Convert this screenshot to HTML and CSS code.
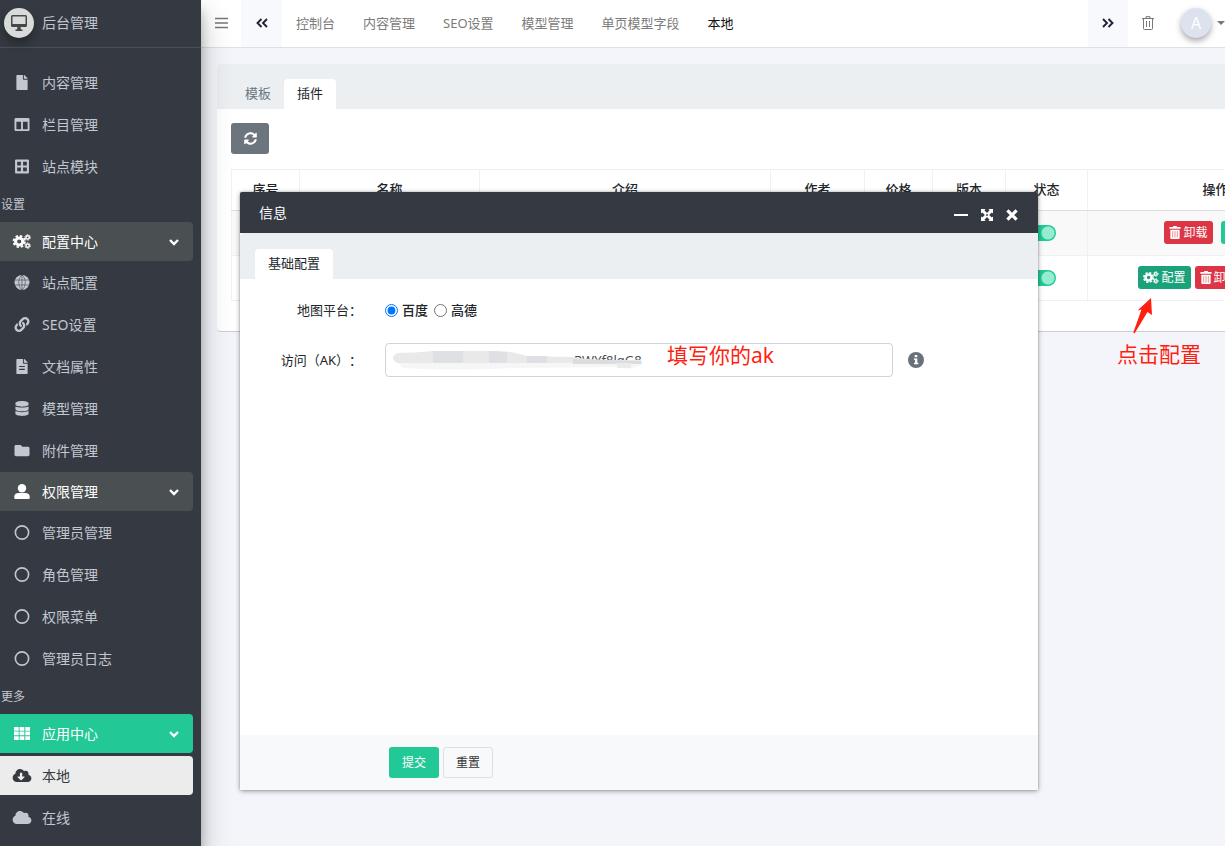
FILE: index.html
```html
<!DOCTYPE html>
<html lang="zh-CN">
<head>
<meta charset="utf-8">
<title>后台管理</title>
<link rel="stylesheet" href="styles.css">
</head>
<body>
<svg class="sprite" aria-hidden="true">
  <symbol id="file" viewBox="0 0 384 512"><path d="M224 136V0H24C10.700 0 0 10.700 0 24v464c0 13.300 10.700 24 24 24h336c13.300 0 24-10.700 24-24V160H248c-13.200 0-24-10.800-24-24zm160-14v6H256V0h6c6.400 0 12.500 2.500 17 7l98 98c4.500 4.500 7 10.600 7 17z"/></symbol>
  <symbol id="doc" viewBox="0 0 384 512"><path fill-rule="evenodd" d="M224 136V0H24C10.700 0 0 10.700 0 24v464c0 13.300 10.700 24 24 24h336c13.300 0 24-10.700 24-24V160H248c-13.200 0-24-10.800-24-24zm160-14v6H256V0h6c6.400 0 12.500 2.500 17 7l98 98c4.500 4.500 7 10.600 7 17zM96 240v36h192v-36zM96 336v36h192v-36z"/></symbol>
  <symbol id="columns" viewBox="0 0 512 512"><path d="M464 32H48C21.490 32 0 53.490 0 80v352c0 26.510 21.490 48 48 48h416c26.510 0 48-21.490 48-48V80c0-26.510-21.490-48-48-48zM224 416H64V160h160v256zm224 0H288V160h160v256z"/></symbol>
  <symbol id="grid4" viewBox="0 0 14 14"><path fill-rule="evenodd" d="M1.500.5h11a1 1 0 0 1 1 1v11a1 1 0 0 1-1 1h-11a1 1 0 0 1-1-1v-11a1 1 0 0 1 1-1zM2.500 2.500V6H6V2.500zM8 2.500V6h3.500V2.500zM2.500 8v3.500H6V8zM8 8v3.500h3.500V8z"/></symbol>
  <symbol id="gears" viewBox="0 0 20 16"><g fill="none" stroke="currentColor"><circle cx="7" cy="8" r="3.800" stroke-width="3.200"/><circle cx="7" cy="8" r="6" stroke-width="2" stroke-dasharray="2.700 2.012"/><circle cx="16" cy="3.600" r="1.800" stroke-width="1.600"/><circle cx="16" cy="3.600" r="2.900" stroke-width="1" stroke-dasharray="1.700 1.337"/><circle cx="16" cy="12.400" r="1.800" stroke-width="1.600"/><circle cx="16" cy="12.400" r="2.900" stroke-width="1" stroke-dasharray="1.700 1.337"/></g></symbol>
  <symbol id="globe" viewBox="0 0 14 14"><circle cx="7" cy="7" r="7"/><path d="M0 4.700h14M0 9.300h14M7 0v14M7 0C3 3 3 11 7 14M7 0c4 3 4 11 0 14" fill="none" stroke="#353a42" stroke-width=".5"/></symbol>
  <symbol id="link" viewBox="0 0 512 512"><path d="M326.612 185.391c59.747 59.809 58.927 155.698.36 214.590-.11.12-.24.25-.36.37l-67.200 67.200c-59.270 59.270-155.699 59.262-214.960 0-59.270-59.260-59.270-155.700 0-214.960l37.106-37.106c9.840-9.840 26.786-3.300 27.294 10.606.648 17.722 3.826 35.527 9.690 52.721 1.986 5.822.567 12.262-3.783 16.612l-13.087 13.087c-28.026 28.026-28.905 73.660-1.155 101.960 28.024 28.579 74.086 28.749 102.325.51l67.200-67.190c28.191-28.191 28.073-73.757 0-101.830-3.701-3.694-7.429-6.564-10.341-8.569a16.037 16.037 0 0 1-6.947-12.606c-.396-10.567 3.348-21.456 11.698-29.806l21.054-21.055c5.521-5.521 14.182-6.199 20.584-1.731a152.482 152.482 0 0 1 20.522 17.197zM467.547 44.449c-59.261-59.262-155.690-59.270-214.960 0l-67.200 67.200c-.12.12-.25.25-.36.37-58.566 58.892-59.387 154.781.36 214.590a152.454 152.454 0 0 0 20.521 17.196c6.402 4.468 15.064 3.789 20.584-1.731l21.054-21.055c8.350-8.350 12.094-19.239 11.698-29.806a16.037 16.037 0 0 0-6.947-12.606c-2.912-2.005-6.640-4.875-10.341-8.569-28.073-28.073-28.191-73.639 0-101.830l67.200-67.190c28.239-28.239 74.300-28.069 102.325.51 27.750 28.300 26.872 73.934-1.155 101.960l-13.087 13.087c-4.350 4.350-5.769 10.790-3.783 16.612 5.864 17.194 9.042 34.999 9.690 52.721.509 13.906 17.454 20.446 27.294 10.606l37.106-37.106c59.271-59.259 59.271-155.699.001-214.959z"/></symbol>
  <symbol id="db" viewBox="0 0 448 512"><path d="M448 73v46c0 40-100 73-224 73S0 159 0 119V73C0 33 100 0 224 0s224 33 224 73zM448 176v103c0 40-100 73-224 73S0 319 0 279V176c48 33 136 49 224 49s176-16 224-49zm0 160v103c0 40-100 73-224 73S0 479 0 439V336c48 33 136 49 224 49s176-16 224-49z"/></symbol>
  <symbol id="folder" viewBox="0 0 512 512"><path d="M464 128H272l-64-64H48C21.500 64 0 85.500 0 112v288c0 26.500 21.500 48 48 48h416c26.500 0 48-21.500 48-48V176c0-26.500-21.500-48-48-48z"/></symbol>
  <symbol id="user" viewBox="0 0 16 15"><circle cx="8" cy="4.300" r="4.200"/><path d="M4.500 9h7C14 9 15.700 10.500 15.700 12.500V14a1 1 0 0 1-1 1H1.300a1 1 0 0 1-1-1v-1.500C.3 10.500 2 9 4.500 9z"/></symbol>
  <symbol id="ring" viewBox="0 0 14 14"><circle cx="7" cy="7" r="6.200" fill="none" stroke="currentColor" stroke-width="1.500"/></symbol>
  <symbol id="grid9" viewBox="0 0 16 13"><path d="M0 0h4.700v3.700H0zM5.600 0h4.700v3.700H5.600zM11.300 0H16v3.700h-4.700zM0 4.600h4.700v3.700H0zM5.600 4.600h4.700v3.700H5.600zM11.300 4.600H16v3.700h-4.700zM0 9.300h4.700V13H0zM5.600 9.300h4.700V13H5.600zM11.300 9.300H16V13h-4.700z"/></symbol>
  <symbol id="cloud" viewBox="0 0 640 512"><path d="M538 227c4-11 6-23 6-35 0-53-43-96-96-96-20 0-38 6-53 16C367 64 315 32 256 32c-88 0-160 72-160 160v8C40 220 0 273 0 336c0 79.500 64.500 144 144 144h368c71 0 128-57 128-128 0-62-44-114-102-125z"/></symbol>
  <symbol id="cloud-down" viewBox="0 0 640 512"><path d="M538 227c4-11 6-23 6-35 0-53-43-96-96-96-20 0-38 6-53 16C367 64 315 32 256 32c-88 0-160 72-160 160v8C40 220 0 273 0 336c0 79.500 64.500 144 144 144h368c71 0 128-57 128-128 0-62-44-114-102-125zM405 315L299 421c-6 6-16 6-22 0L171 315c-10-10-3-27 12-27h65V176c0-9 7-16 16-16h48c9 0 16 7 16 16v112h65c15 0 22 17 12 27z"/></symbol>
  <symbol id="sync" viewBox="0 0 512 512"><path d="M370.720 133.280C339.458 104 298.888 88 255.848 88c-77.458 0-144.328 53.178-162.791 126.850-1.344 5.363-6.122 9.150-11.651 9.150H24.103c-7.498 0-13.194-6.807-11.807-14.176C33.933 94.924 134.813 8 256 8c66.448 0 126.791 26.136 171.315 68.685L463.030 40.970C478.149 25.851 504 36.559 504 57.941V192c0 13.255-10.745 24-24 24H345.941c-21.382 0-32.090-25.851-16.971-40.971zM32 296h134.059c21.382 0 32.090 25.851 16.971 40.971l-41.750 41.750c31.262 29.273 71.835 45.319 114.876 45.280 77.418-.07 144.315-53.144 162.787-126.849 1.344-5.363 6.122-9.150 11.651-9.150h57.304c7.498 0 13.194 6.807 11.807 14.176C478.067 417.076 377.187 504 256 504c-66.448 0-126.791-26.136-171.315-68.685L48.970 471.030C33.851 486.149 8 475.441 8 454.059V320c0-13.255 10.745-24 24-24z"/></symbol>
  <symbol id="down" viewBox="0 0 10 8"><path d="M1 2l4 4 4-4" fill="none" stroke="currentColor" stroke-width="2.400"/></symbol>
  <symbol id="trash" viewBox="0 0 12 14"><path fill-rule="evenodd" d="M4 0h4v1h4v2H0V1h4zM1 4h10v9a1 1 0 0 1-1 1H2a1 1 0 0 1-1-1z"/><path d="M3.500 5.500v7M6 5.500v7M8.500 5.500v7" stroke="#dc3545" stroke-width=".6"/></symbol>
</svg>

<div class="app">
  <aside class="sidebar">
    <a class="brand" href="#">
      <span class="brand-logo"><svg viewBox="0 0 16 16" width="16" height="16"><path fill-rule="evenodd" d="M1.500 0h13A1.500 1.500 0 0 1 16 1.500v9a1.500 1.500 0 0 1-1.500 1.500h-13A1.500 1.500 0 0 1 0 10.500v-9A1.500 1.500 0 0 1 1.500 0zM1.500 1.500v7.500h13V1.500zM6.500 12h3l.5 2.500h1.500V16h-7v-1.500H6z"/></svg></span>
      <span>后台管理</span>
    </a>
    <nav class="side-nav">
      <ul class="menu">
        <li><a class="item" href="#"><svg class="ico"><use href="#file"/></svg>内容管理</a></li>
        <li><a class="item" href="#"><svg class="ico"><use href="#columns"/></svg>栏目管理</a></li>
        <li><a class="item" href="#"><svg class="ico"><use href="#grid4"/></svg>站点模块</a></li>
      </ul>
      <h2 class="menu-label">设置</h2>
      <ul class="menu menu-tree">
        <li>
          <a class="item open" href="#"><svg class="ico"><use href="#gears"/></svg>配置中心<svg class="chev"><use href="#down"/></svg></a>
          <ul class="menu sub">
            <li><a class="item" href="#"><svg class="ico"><use href="#globe"/></svg>站点配置</a></li>
            <li><a class="item" href="#"><svg class="ico"><use href="#link"/></svg>SEO设置</a></li>
            <li><a class="item" href="#"><svg class="ico"><use href="#doc"/></svg>文档属性</a></li>
            <li><a class="item" href="#"><svg class="ico"><use href="#db"/></svg>模型管理</a></li>
            <li><a class="item" href="#"><svg class="ico"><use href="#folder"/></svg>附件管理</a></li>
          </ul>
        </li>
        <li>
          <a class="item open" href="#"><svg class="ico"><use href="#user"/></svg>权限管理<svg class="chev"><use href="#down"/></svg></a>
          <ul class="menu sub">
            <li><a class="item" href="#"><svg class="ico"><use href="#ring"/></svg>管理员管理</a></li>
            <li><a class="item" href="#"><svg class="ico"><use href="#ring"/></svg>角色管理</a></li>
            <li><a class="item" href="#"><svg class="ico"><use href="#ring"/></svg>权限菜单</a></li>
            <li><a class="item" href="#"><svg class="ico"><use href="#ring"/></svg>管理员日志</a></li>
          </ul>
        </li>
      </ul>
      <h2 class="menu-label">更多</h2>
      <ul class="menu">
        <li><a class="item open primary" href="#"><svg class="ico short"><use href="#grid9"/></svg>应用中心<svg class="chev"><use href="#down"/></svg></a></li>
        <li><a class="item current" href="#"><svg class="ico"><use href="#cloud-down"/></svg>本地</a></li>
        <li><a class="item" href="#"><svg class="ico"><use href="#cloud"/></svg>在线</a></li>
      </ul>
    </nav>
  </aside>

  <div class="main">
    <header class="topbar">
      <button class="bar-btn" aria-label="菜单"><svg width="13" height="12" viewBox="0 0 13 12"><path d="M0 1.500h13M0 6h13M0 10.500h13" stroke="#777" stroke-width="1.400"/></svg></button>
      <button class="bar-btn scroll prev" aria-label="向左"><svg width="12" height="10" viewBox="0 0 12 10"><path d="M5.500 1l-4 4 4 4M11 1L7 5l4 4" fill="none" stroke="#1d2433" stroke-width="1.900"/></svg></button>
      <nav class="pages">
        <a href="#">控制台</a><a href="#">内容管理</a><a href="#">SEO设置</a><a href="#">模型管理</a><a href="#">单页模型字段</a><a class="active" href="#">本地</a>
      </nav>
      <button class="bar-btn scroll" aria-label="向右"><svg width="12" height="10" viewBox="0 0 12 10"><path d="M1 1l4 4-4 4M6.500 1l4 4-4 4" fill="none" stroke="#1d2433" stroke-width="1.900"/></svg></button>
      <button class="bar-btn" aria-label="清理"><svg width="12" height="14" viewBox="0 0 12 14"><path d="M0 2.500h12M4 2.500V.7h4v1.800M1.500 2.500v10a1 1 0 0 0 1 1h7a1 1 0 0 0 1-1v-10M4.500 5v6M7.500 5v6" fill="none" stroke="#777"/></svg></button>
      <a class="account" href="#"><span class="avatar">A</span><svg width="8" height="4" viewBox="0 0 8 4"><path d="M0 0h8L4 4z" fill="#777"/></svg></a>
    </header>

    <main class="content">
      <section class="card">
        <div class="tabs"><a class="tab" href="#">模板</a><a class="tab active" href="#">插件</a></div>
        <div class="card-body">
          <button class="refresh" aria-label="刷新"><svg width="13" height="13"><use href="#sync"/></svg></button>
          <table class="plugins">
            <colgroup><col class="c-no"><col class="c-name"><col class="c-desc"><col class="c-author"><col class="c-price"><col class="c-ver"><col class="c-state"><col class="c-act"></colgroup>
            <thead><tr><th>序号</th><th>名称</th><th>介绍</th><th>作者</th><th>价格</th><th>版本</th><th>状态</th><th>操作</th></tr></thead>
            <tbody>
              <tr class="striped"><td></td><td></td><td></td><td></td><td></td><td></td><td><input class="switch" type="checkbox" checked aria-label="状态"></td>
                <td><div class="actions loose"><button class="btn-xs danger"><svg width="12" height="13"><use href="#trash"/></svg>卸载</button><button class="btn-xs more" aria-label="更多"></button></div></td></tr>
              <tr><td></td><td></td><td></td><td></td><td></td><td></td><td><input class="switch" type="checkbox" checked aria-label="状态"></td>
                <td><div class="actions"><button class="btn-xs config"><svg width="16" height="13"><use href="#gears"/></svg>配置</button><button class="btn-xs danger"><svg width="12" height="13"><use href="#trash"/></svg>卸载</button><button class="btn-xs more" aria-label="更多"></button></div></td></tr>
            </tbody>
          </table>
        </div>
      </section>
    </main>
  </div>
</div>

<div class="dialog" role="dialog" aria-labelledby="dialog-title">
  <div class="dialog-head">
    <span id="dialog-title" class="dialog-title">信息</span>
    <button aria-label="最小化"><svg width="14" height="14" viewBox="0 0 14 14"><path d="M0 7h14" stroke="#fff" stroke-width="2"/></svg></button>
    <button aria-label="最大化"><svg width="12" height="12" viewBox="0 0 13 13"><path d="M0 0h5L3.700 1.300 6.500 4.200 9.300 1.300 8 0h5v5l-1.300-1.300L8.800 6.500l2.900 2.800L13 8v5H8l1.300-1.300-2.800-2.900-2.800 2.900L5 13H0V8l1.300 1.300 2.900-2.800-2.900-2.800L0 5z" fill="#fff"/><circle cx="6.500" cy="6.500" r="1" fill="#353a42"/></svg></button>
    <button aria-label="关闭"><svg width="12" height="12" viewBox="0 0 12 12"><path d="M1.400 1.400l9.200 9.200M10.600 1.400l-9.200 9.200" stroke="#fff" stroke-width="3.200"/></svg></button>
  </div>
  <div class="tabs dialog-tabs"><a class="tab active" href="#">基础配置</a></div>
  <form class="form">
    <div class="row">
      <span class="label" id="platform">地图平台：</span>
      <div class="radios" role="radiogroup" aria-labelledby="platform">
        <label><input type="radio" name="map" checked>百度</label>
        <label><input type="radio" name="map">高德</label>
      </div>
    </div>
    <div class="row">
      <label class="label" for="ak">访问（AK）：</label>
      <div class="field">
        <input class="text" id="ak" type="text" value="RWYf8lgG8">
        <svg class="mask" width="264" height="20" viewBox="0 0 264 20">
          <path d="M7 9H248V14Q238 20 222 16L120 17Q60 20 10 17Q4 14 7 9z" fill="#f6f6f7"/>
          <path d="M4 2Q22 2 40 0Q82-2 118 1L134 5L180 6Q200 10 248 9V12H4Q-4 7 4 2z" fill="#e9e9ea"/>
          <path d="M40 0H70V12H40zM96 0l18 1v11H96zM134 5h20v7h-20z" fill="#dfe0e3"/>
          <path d="M180 8l68 2v3h-68z" fill="#dcdcdd"/>
          <path d="M222 12h16v5h-12z" fill="#ebebec"/>
        </svg>
        <span class="note field-note">填写你的ak</span>
      </div>
      <svg class="info" width="16" height="16" viewBox="0 0 16 16" role="img" aria-label="说明"><circle cx="8" cy="8" r="8" fill="#69727b"/><path d="M6.700 3h2.600v2.300H6.700zM6 6.500h3.300v4.300h1v1.500H6v-1.500h1V8H6z" fill="#fff"/></svg>
    </div>
    <div class="form-foot">
      <button class="btn submit" type="button">提交</button><button class="btn reset" type="reset">重置</button>
    </div>
  </form>
</div>

<div class="callout">
  <svg width="24" height="36" viewBox="0 0 24 36"><path d="M20 0L6.500 12.500l4-1L2.500 34v1l1 .5L16.500 14l4.500 3z" fill="#ff1f10"/></svg>
  <span class="note">点击配置</span>
</div>
</body>
</html>
```

FILE: styles.css
```css
* { box-sizing: border-box; }

body {
  margin: 0;
  font: 13px/20px "Noto Sans", "Noto Sans CJK SC", sans-serif;
  color: #212529;
  background: #f4f5fa;
  position: relative;
  min-height: 100vh;
  overflow: hidden;
  text-spacing-trim: space-all;
}

a { color: inherit; text-decoration: none; }
button { font: inherit; color: inherit; border: 0; background: none; padding: 0; cursor: pointer; }
svg { fill: currentColor; flex: none; }
.sprite { display: none; }

.app { display: flex; height: 100vh; }

/* Sidebar */
.sidebar {
  flex: 0 0 201px;
  background: #353a42;
  color: #c2c7d0;
  font-size: 14px;
  position: relative;
  z-index: 2;
  box-shadow: 0 14px 28px rgba(0, 0, 0, .25), 0 10px 10px rgba(0, 0, 0, .22);
}
.brand {
  display: flex;
  align-items: center;
  gap: 8px;
  height: 48px;
  padding: 0 4px 2px;
  border-bottom: 1px solid #4b5057;
}
.brand-logo {
  display: grid;
  place-items: center;
  width: 30px;
  height: 30px;
  border-radius: 50%;
  background: #d9dada;
  color: #45484a;
  box-shadow: 0 6px 10px rgba(0, 0, 0, .3);
}
.side-nav { padding-top: 15px; }
.menu { list-style: none; margin: 0; padding: 0; display: flex; flex-direction: column; gap: 3px; }
.menu-tree { gap: 2px; }
.sub { margin-top: 2px; }
.menu-label {
  height: 36px;
  margin: 0;
  padding-left: 1px;
  font-size: 12px;
  font-weight: 400;
  line-height: 38px;
}
.item {
  display: flex;
  align-items: center;
  height: 39px;
  width: 193px;
  padding-left: 12px;
  border-radius: 0 4px 4px 0;
}
.ico { width: 20px; height: 15px; margin-right: 10px; }
.ico.short { height: 13px; }
.chev { width: 10px; height: 8px; margin-left: auto; margin-right: 14px; }
.open { background: #4a4f52; color: #fff; }
.primary { background: #22c997; }
.current { background: #ebeceb; color: #343a40; }

/* Top bar */
.main { flex: 1; min-width: 0; overflow: hidden; }
.topbar {
  display: flex;
  height: 48px;
  background: #fff;
  border-bottom: 1px solid #dee0e2;
  color: #7b7b7b;
}
.bar-btn { flex: 0 0 40px; display: grid; place-items: center; padding-bottom: 2px; }
.scroll { background: #f8f9fc; }
.prev { flex-basis: 41px; }
.pages { flex: 1; display: flex; align-items: center; padding-bottom: 2px; min-width: 0; }
.pages a { padding: 0 14px; white-space: nowrap; }
.pages .active { color: #111; }
.account { flex: 0 0 57px; display: flex; align-items: center; gap: 6px; padding: 0 0 2px 13px; }
.avatar {
  flex: none;
  width: 30px;
  height: 30px;
  border-radius: 50%;
  background: #dde3ee;
  color: #fff;
  font-size: 16px;
  line-height: 30px;
  text-align: center;
  box-shadow: 0 3px 6px rgba(0, 0, 0, .35);
}

/* Plugin list */
.content { padding: 16px 0 0 16px; }
.card { background: #fff; border-bottom: 1px solid #ccced2; border-radius: 4px 0 0 4px; }
.tabs {
  display: flex;
  align-items: flex-end;
  height: 45px;
  padding-left: 15px;
  background: #ebeff2;
  border-radius: 4px 0 0 0;
  color: #6c757d;
}
.tab { padding: 4px 13px 6px; }
.tab.active { background: #fff; color: #212529; border-radius: 4px 4px 0 0; }
.card-body { padding: 14px 14px 30px; }
.refresh {
  display: grid;
  place-items: center;
  width: 38px;
  height: 31px;
  margin-bottom: 15px;
  border-radius: 3px;
  background: #6c757d;
  color: #fff;
}
.plugins { width: 1112px; table-layout: fixed; border-collapse: collapse; }
.plugins th, .plugins td { border: 1px solid #f0f1f2; padding: 0; text-align: center; }
.plugins th { height: 41px; padding-bottom: 2px; font-weight: 500; border-bottom-color: #dcdfe1; }
.plugins td { height: 45px; padding-bottom: 1px; }
.striped { background: #f9f9f9; }
.c-no { width: 68px; }
.c-name { width: 180px; }
.c-desc { width: 291px; }
.c-author { width: 94px; }
.c-price { width: 68px; }
.c-ver { width: 73px; }
.c-state { width: 82px; }
.c-act { width: 256px; }
.switch {
  appearance: none;
  display: block;
  width: 30px;
  height: 16px;
  margin: 0 auto 0 20px;
  border-radius: 8px;
  background: radial-gradient(circle at 22px 8px, #94edd0 6px, #22c997 7px);
}
.actions { display: flex; justify-content: center; gap: 4px; }
.loose { gap: 8px; }
.btn-xs {
  display: flex;
  align-items: center;
  gap: 2px;
  height: 23px;
  padding: 0 5px;
  border-radius: 3px;
  color: #fff;
  font-size: 12px;
  white-space: nowrap;
}
.danger { background: #dc3545; }
.config { background: #1ca27a; }
.more { width: 46px; background: #22c997; }

/* Dialog */
.dialog {
  position: absolute;
  z-index: 3;
  top: 192px;
  left: 240px;
  right: 187px;
  bottom: 56px;
  display: flex;
  flex-direction: column;
  background: #fff;
  border-radius: 2px;
  box-shadow: 0 0 1px rgba(0, 0, 0, .5), 0 1px 5px rgba(0, 0, 0, .4);
}
.dialog-head {
  display: flex;
  align-items: center;
  height: 41px;
  padding: 0 20px 0 19px;
  gap: 13px;
  background: #353a42;
  color: #fff;
  font-size: 14px;
  border-radius: 2px 2px 0 0;
}
.dialog-title { flex: 1; }
.dialog-head button { display: flex; padding-top: 4px; }
.dialog-tabs { height: 46px; }
.form { flex: 1; display: flex; flex-direction: column; padding-top: 14px; }
.row { display: flex; align-items: center; min-height: 34px; margin-bottom: 16px; }
.label { flex: 0 0 122px; margin-right: 23px; text-align: right; white-space: nowrap; }
.radios { display: flex; gap: 6px; }
.radios label { display: flex; align-items: center; gap: 4px; font-weight: 500; }
.radios input { width: 13px; height: 13px; margin: 0; }
.field { flex: 1; position: relative; }
.text {
  display: block;
  width: 100%;
  height: 34px;
  padding: 0 12px 0 188px;
  border: 1px solid #ced4da;
  border-radius: 4px;
  font: inherit;
  color: #495057;
  background: #fff;
}
.mask { position: absolute; left: 8px; top: 8px; }
.note { color: #ff1f10; font-size: 21px; line-height: 28px; white-space: nowrap; }
.field-note { position: absolute; left: 282px; top: -2px; }
.info { margin: 0 114px 0 15px; }
.form-foot {
  display: flex;
  gap: 4px;
  margin-top: auto;
  padding: 12px 0 12px 149px;
  background: #f8f9fb;
}
.btn { width: 50px; height: 31px; border-radius: 3px; font-size: 12px; }
.submit { background: #22c997; color: #fff; }
.reset { border: 1px solid #dddfe2; color: #333; }

/* Annotation laid over the page */
.callout {
  position: absolute;
  z-index: 4;
  left: 1117px;
  top: 298px;
  display: flex;
  flex-direction: column;
  gap: 6px;
}
.callout svg { margin-left: 14px; }
```
